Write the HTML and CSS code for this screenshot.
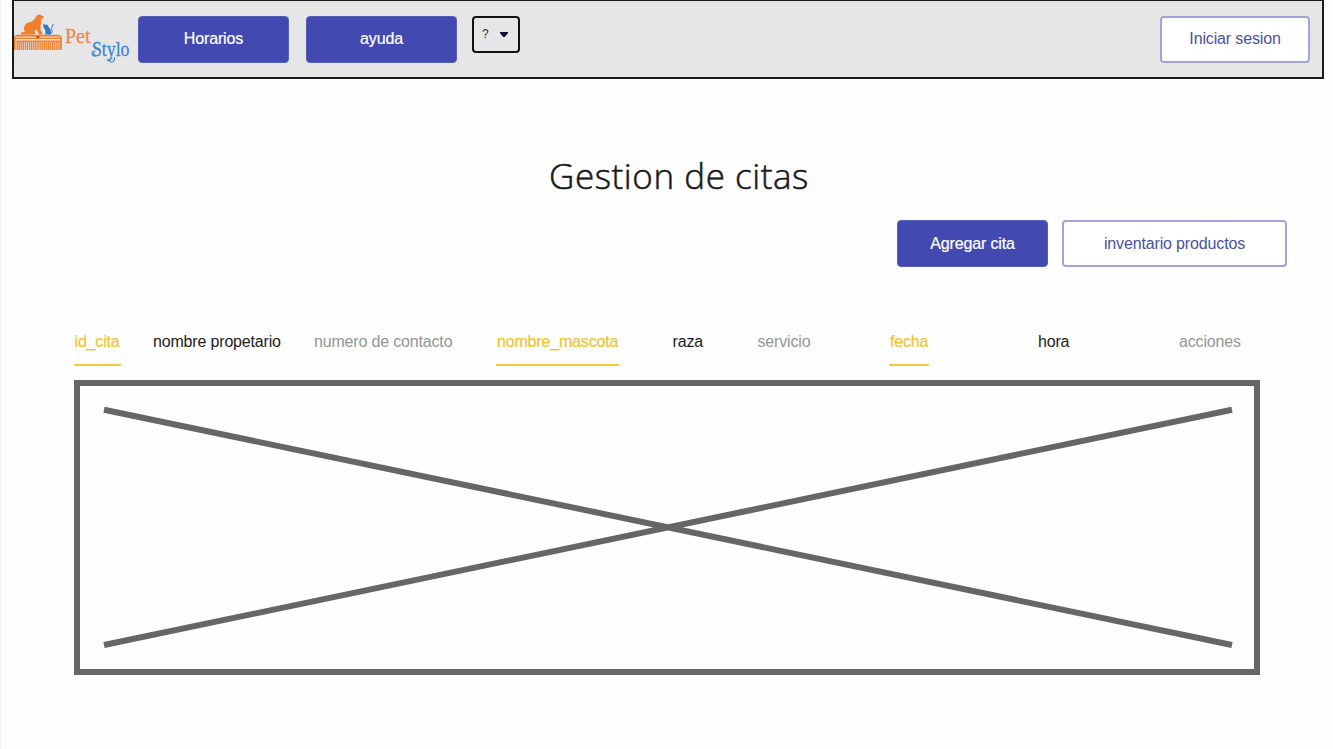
FILE: index.html
```
<!DOCTYPE html>
<html lang="es">
<head>
<meta charset="utf-8">
<title>Gestion de citas</title>
<link rel="stylesheet" href="styles.css">
</head>
<body>
<div class="page">
  <header class="topbar">
    <svg class="logo" viewBox="13 10 120 56" role="img" aria-label="Pet Stylo">
      <g fill="#f07f2c">
        <path d="M20.6 34.4 L21.4 32.4 L25 31.6 L24 29.4 C23.6 25.6 26 22.8 29.5 22.2 C32.6 21.6 34.6 19.6 35.8 17 L37.4 15 L40.3 14.4 L41.2 15.4 L43.5 16 L43.4 18.2 L41 19 L41.4 22 L40.6 25.4 L40.6 30 L42.4 33.2 L42.4 34.4 L39 34.4 L36.8 29.6 L34.4 31 L35.4 34.4 Z"/>
        <path d="M14 40 V37.8 Q14.2 34.6 18.5 34.8 H57 Q61.6 34.6 61.8 37.8 V48.5 H60.6 V39 H15.2 V49 H14 Z"/>
      </g>
      <path d="M14.8 39 V50 M17.2 41 V50 M19.2 41 V50 M21.2 41 V50 M23.3 41 V50 M25.4 41 V50 M27.5 41 V50 M29.6 41 V50 M31.7 41 V50 M33.8 41 V50 M35.9 41 V50 M38 41 V50 M40.1 41 V50 M42.2 41 V50 M44.3 41 V50 M46.4 41 V50 M48.5 41 V50 M50.6 41 V50 M52.7 41 V50 M54.8 41 V50 M56.9 41 V50 M59 41 V50 M61 39 V50" stroke="#f07f2c" stroke-width="1.4"/>
      <path d="M16.5 41.2 H60" stroke="#f07f2c" stroke-width="1.2"/>
      <path d="M15.6 37.2 H35.7 M40.3 37.2 H60.2" stroke="#f3d3bc" stroke-width="1.2"/>
      <circle cx="38" cy="37.1" r="1.1" fill="#a84c18"/>
      <path d="M43.3 23.4 L45.2 24.8 L47.4 24.8 L48.6 27 C50.6 28.6 51.2 30.8 50.8 34.4 H45.2 C46 31.7 45.3 29.5 43.5 27.8 Z" fill="#2f78c4"/>
      <path d="M50 33.8 C53.4 33.2 51.4 30 51.6 27.8 C51.8 26.4 52.8 25.6 53.3 24" fill="none" stroke="#2f78c4" stroke-width="1"/>
      <text class="logo-pet" x="65" y="43" textLength="25.5" lengthAdjust="spacingAndGlyphs">Pet</text>
      <text class="logo-stylo" x="92" y="55.5" textLength="37.5" lengthAdjust="spacingAndGlyphs">Stylo</text>
      <path d="M95.6 51.2 Q91.6 50.4 92 53.6 Q92.6 56.6 96.4 56" fill="none" stroke="#3c86d4" stroke-width="1.1"/>
      <path d="M112.4 58.6 Q109 58.2 109.4 60.6 Q110.6 63 113.4 61.4 Q114.8 60 114.8 57" fill="none" stroke="#3c86d4" stroke-width="1.1"/>
    </svg>
    <nav class="nav">
      <button class="btn btn-solid">Horarios</button>
      <button class="btn btn-solid">ayuda</button>
      <button class="select">?<svg class="caret" viewBox="0 0 8 5"><path d="M0 0 H8 V1 L4.8 5 H3.2 L0 1 Z"/></svg></button>
    </nav>
    <button class="btn btn-outline login">Iniciar sesion</button>
  </header>
  <main class="content">
    <h1 class="title">Gestion de citas</h1>
    <div class="actions">
      <button class="btn btn-solid">Agregar cita</button>
      <button class="btn btn-outline wide">inventario productos</button>
    </div>
    <div class="columns">
      <span class="col active">id_cita</span>
      <span class="col">nombre propetario</span>
      <span class="col muted">numero de contacto</span>
      <span class="col active">nombre_mascota</span>
      <span class="col">raza</span>
      <span class="col muted">servicio</span>
      <span class="col active">fecha</span>
      <span class="col">hora</span>
      <span class="col muted">acciones</span>
    </div>
    <svg class="placeholder" viewBox="0 0 1186 295">
      <rect x="3" y="3" width="1180" height="289"/>
      <path d="M30 29.7 L1158 265 M30 265 L1158 29.7"/>
    </svg>
  </main>
</div>
</body>
</html>
```

FILE: styles.css
```
* { box-sizing: border-box; }
body {
  margin: 0;
  background: #fefefe;
  color: #1c1c20;
  font-family: "Liberation Sans", Arial, sans-serif;
  font-size: 16px;
}
.page {
  height: 749px;
  border-left: 1px solid #f1f1f1;
  padding-left: 11px;
  overflow: hidden;
}
.topbar {
  display: flex;
  align-items: flex-start;
  width: 1312px;
  height: 79px;
  padding-right: 12px;
  background: #e6e6e6;
  border: 2px solid #1a1a1c;
  border-top-width: 1px;
}
.logo {
  flex: none;
  width: 120px;
  height: 56px;
  margin: 9px 0 0 -1px;
  overflow: visible;
}
.logo-pet, .logo-stylo {
  font-family: "Liberation Serif", "Times New Roman", serif;
  font-size: 21px;
  stroke-width: .3;
}
.logo-pet { fill: #ee8a4c; stroke: #ee8a4c; }
.logo-stylo { fill: #3c86d4; stroke: #3c86d4; }
.nav { display: flex; gap: 17px; margin: 15px 0 0 5px; }
.btn {
  width: 151px;
  height: 47px;
  padding: 0 0 2px;
  border-radius: 4px;
  font: inherit;
  letter-spacing: -.15px;
}
.btn-solid {
  background: #424ab1;
  border: 1px solid #5860bb;
  color: #fff;
  -webkit-text-stroke: .2px #fff;
}
.btn-outline { background: #fff; border: 2px solid #a0a5d8; color: #4a50a4; }
.login { width: 150px; margin: 15px 0 0 auto; }
.wide { width: 225px; }
.select {
  display: flex;
  align-items: center;
  justify-content: space-between;
  width: 48px;
  height: 37px;
  margin-left: -2px;
  padding: 0 10px 1px 8px;
  background: #e6e6e6;
  border: 2px solid #111;
  border-radius: 4px;
  color: #333;
  font: 12px "Liberation Sans", Arial, sans-serif;
}
.caret { width: 8px; height: 5px; margin-top: 1px; fill: #0d0838; }
.title {
  width: 1334px;
  margin: 72px 0 0;
  height: 50px;
  color: #1a1a1a;
  font: 300 35px/49px "Open Sans", sans-serif;
  letter-spacing: .55px;
  text-align: center;
  -webkit-text-stroke: .55px #1a1a1a;
}
.actions {
  display: flex;
  justify-content: flex-end;
  gap: 14px;
  width: 1275px;
  margin-top: 19px;
}
.actions .btn { padding: 0; }
.columns {
  display: grid;
  grid-template-columns: 79px 161px 182px 176.5px 85px 131.5px 149px 141px 80px;
  justify-items: start;
  height: 46px;
  margin: 53px 0 0 62px;
  letter-spacing: -.17px;
}
.col { padding: 13px 0 0; white-space: nowrap; }
.active {
  margin-right: -1px;
  padding: 13px 1px 0;
  border-bottom: 2px solid #f2cb3c;
  color: #efc42e;
  -webkit-text-stroke: .2px #efc42e;
}
.col:first-child { padding-left: .5px; }
.muted { color: #959595; }
.placeholder {
  display: block;
  width: 1186px;
  height: 295px;
  margin: 14px 0 0 62px;
  fill: none;
  stroke: #666;
  stroke-width: 6;
}
```
